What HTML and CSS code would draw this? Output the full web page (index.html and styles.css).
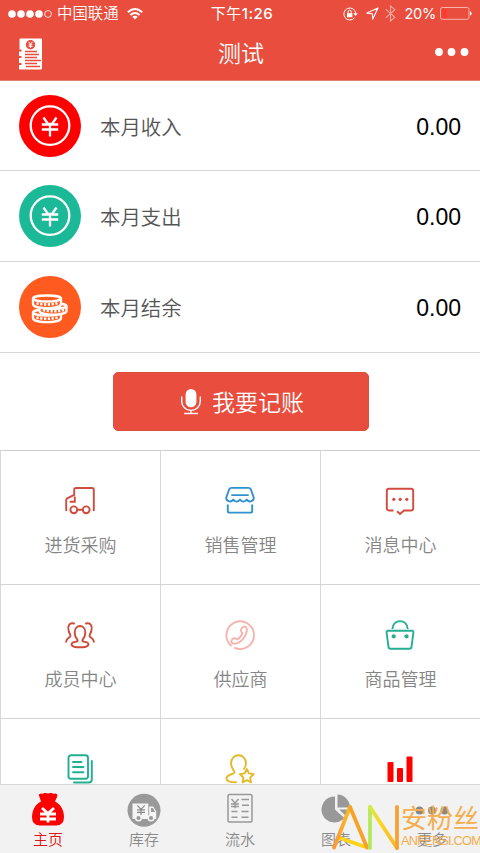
FILE: index.html
```html
<!DOCTYPE html>
<html lang="zh-CN">
<head>
<meta charset="utf-8">
<title>测试</title>
<link rel="stylesheet" href="styles.css">
</head>
<body>
<div class="app">
  <header class="header">
    <div class="status">
      <div class="status-left">
        <svg class="signal" width="44" height="10" viewBox="0 0 44 10"><g fill="#fff"><circle cx="4" cy="5" r="3.8"/><circle cx="13" cy="5" r="3.8"/><circle cx="22" cy="5" r="3.8"/><circle cx="31" cy="5" r="3.8"/></g><circle cx="40" cy="5" r="3.4" fill="none" stroke="#fff" stroke-width=".8"/></svg>
        <span class="carrier">中国联通</span>
        <svg width="16" height="12" viewBox="0 0 16 12"><g fill="none" stroke="#fff" stroke-width="1.9"><path d="M.8 4.2Q8-2 15.2 4.2"/><path d="M3.4 7Q8 3.1 12.6 7"/></g><path d="M5.3 8.7Q8 6.7 10.7 8.7L8 11.6Z" fill="#fff"/></svg>
      </div>
      <span class="time"><span class="period">下午</span>1:26</span>
      <div class="status-right">
        <svg width="15" height="14" viewBox="0 0 15 14"><path d="M11.500 10.800A6 6 0 1 1 12.800 6.200" fill="none" stroke="#fff" stroke-width="1"/><path d="M10.200 6.200h4.600l-2.300 2.700Z" fill="#fff"/><rect x="4" y="6.200" width="5.400" height="4" fill="#fff"/><path d="M5.100 6.300V4.900a1.600 1.600 0 0 1 3.200 0v1.400" fill="none" stroke="#fff"/></svg>
        <svg width="13" height="13" viewBox="0 0 13 13"><path d="M12 1 .9 6.100l5.400.6.5 5.400Z" fill="none" stroke="#fff" stroke-width="1.100" stroke-linejoin="round"/></svg>
        <svg width="11" height="17" viewBox="0 0 11 17"><path d="M.7 4.200 9.800 12.300 5.500 16V1l4.300 3.700L.7 12.800" fill="none" stroke="#f5aaa1" stroke-width="1.100"/></svg>
        <span class="percent">20%</span>
        <svg class="battery" width="32" height="13" viewBox="0 0 32 13"><rect x=".5" y=".5" width="28.500" height="11.800" rx="1.800" fill="none" stroke="#f7b4ac"/><rect x="2" y="2" width="5" height="8.800" fill="#ff3b30"/><path d="M30 4.300q1.600.4 1.600 2.100T30 8.500Z" fill="#fff"/></svg>
      </div>
    </div>
    <div class="nav">
      <svg class="ledger" width="24" height="32" viewBox="0 0 24 32"><path d="M1.500.5H22q1 0 1 1v29q0 1-1 1H1q-1 0-1-1V27h2.500v-2H0v-5h2.500v-2H0v-4.500h2.500v-2H.500V1.500q0-1 1-1Z" fill="#fff"/><circle cx="11.500" cy="6.800" r="4.700" fill="#e84d3d"/><path d="m9.600 3.800 1.900 2.600 1.900-2.600M11.500 6.400v3.500M9.600 6.800h3.800M9.600 8.300h3.800" fill="none" stroke="#fff" stroke-width="1"/><path d="M6 13.500h12M6 16.500h14M6 19.500h12M6 22.500h16M6 25.500h12M7 28.500h14" stroke="#e84d3d" stroke-width="1.700"/></svg>
      <h1 class="title">测试</h1>
      <svg class="dots" width="34" height="8" viewBox="0 0 34 8"><g fill="#fff"><circle cx="4" cy="4" r="3.900"/><circle cx="16.500" cy="4" r="3.900"/><circle cx="29.500" cy="4" r="3.900"/></g></svg>
    </div>
  </header>

  <section class="summary">
    <div class="row">
      <svg class="badge" width="62" height="62" viewBox="0 0 62 62"><circle cx="31" cy="31" r="31" fill="#f00"/><g fill="none" stroke="#fff"><circle cx="31" cy="30.600" r="19.300" stroke-width="2.300"/><path d="m24.500 22.500 4.500 6.500h4l4.500-6.500M31 29v12.500M22.800 29.500h16.400M22.800 34.500h16.400" stroke-width="2.300"/></g></svg>
      <span class="name">本月收入</span><span class="amount">0.00</span>
    </div>
    <div class="row">
      <svg class="badge" width="62" height="62" viewBox="0 0 62 62"><circle cx="31" cy="31" r="31" fill="#1cb999"/><g fill="none" stroke="#fff"><circle cx="31" cy="30.600" r="19.300" stroke-width="2.300"/><path d="m24.500 22.500 4.500 6.500h4l4.500-6.500M31 29v12.500M22.800 29.500h16.400M22.800 34.500h16.400" stroke-width="2.300"/></g></svg>
      <span class="name">本月支出</span><span class="amount">0.00</span>
    </div>
    <div class="row">
      <svg class="badge" width="62" height="62" viewBox="0 0 62 62"><circle cx="31" cy="31" r="31" fill="#ff5a20"/><g fill="#ff5a20" stroke="#fff" stroke-width="2.300"><path d="M14 36.500v5.500c0 5.500 28 5.500 28 0v-5.500"/><ellipse cx="28" cy="36.500" rx="14" ry="3"/><path d="M20.500 30v5c0 4.800 27 4.800 27 0v-5"/><ellipse cx="34" cy="30" rx="13.500" ry="2.800"/><path d="M14 22.500v5.500c0 5.500 28 5.500 28 0v-5.500"/><ellipse cx="28" cy="22.500" rx="14" ry="3"/></g><path d="M17.500 27.200q10.500 2.500 21 0M24 34q10.500 2.500 21 0M17.500 41.500q10.500 2.500 21 0" fill="none" stroke="#fff" stroke-width="2.600" stroke-dasharray="2.200 1.600"/></svg>
      <span class="name">本月结余</span><span class="amount">0.00</span>
    </div>
  </section>

  <div class="action">
    <button class="record">
      <svg width="20" height="26" viewBox="0 0 20 26"><rect x="4.600" y="0" width="10.800" height="18.300" rx="5.400" fill="#fff"/><path d="M.7 7.500v4.700a9.300 9.300 0 0 0 18.600 0V7.500M10 21.500v2.800M3.200 24.500h13.600" fill="none" stroke="#fff" stroke-width="1.400"/></svg>
      <span>我要记账</span>
    </button>
  </div>

  <main class="grid">
    <div class="cell">
      <svg class="icon" viewBox="0 -.8 30 30"><g fill="none" stroke="#cf4b3e" stroke-width="1.900" stroke-linecap="round"><path d="M1.200 23.500V13.200q0-1.200 1-1.700l7-3.400V3q0-1.800 1.800-1.800h16q1.800 0 1.800 1.800v20.500M9.800 10.500v4.400H5.500M12.300 23h5.300"/><circle cx="8.800" cy="23" r="3.400"/><circle cx="21.200" cy="23" r="3.400"/></g></svg>
      <span>进货采购</span>
    </div>
    <div class="cell">
      <svg class="icon" viewBox="0 -.6 30 30"><g fill="none" stroke="#3292cf" stroke-width="1.900" stroke-linecap="round" stroke-linejoin="round"><path d="M6.500 1.300h17q1.700 0 2.300 1.400l2.800 7.800c.8 4.200-4.500 5.800-6.800 2.500q-3.400 4-6.800 0-3.400 4-6.800 0c-2.300 3.300-7.600 1.700-6.800-2.500l2.800-7.800q.6-1.400 2.300-1.400ZM7 8.500h16M2.800 18.500v5.800q0 1.700 1.700 1.700h21q1.700 0 1.700-1.700v-5.800"/></g></svg>
      <span>销售管理</span>
    </div>
    <div class="cell">
      <svg class="icon" viewBox="0 -.5 30 30"><path d="M8.500 24H4q-2.200 0-2.200-2.200V4.400Q1.800 2.200 4 2.200h22q2.200 0 2.200 2.200v17.400Q28.200 24 26 24h-7l-4 3.500-3-2.800" fill="none" stroke="#d24b3d" stroke-width="1.900"/><g fill="#d24b3d"><circle cx="8.800" cy="12.800" r="1.600"/><circle cx="15.200" cy="12.800" r="1.600"/><circle cx="21.800" cy="12.800" r="1.600"/></g></svg>
      <span>消息中心</span>
    </div>
    <div class="cell">
      <svg class="icon" viewBox="0 0 30 30"><g fill="none" stroke="#cf4938" stroke-width="1.900" stroke-linecap="round" stroke-linejoin="round"><path d="M12.500 19.800c-2-2.200-2.800-4-2.800-7.400 0-8.600 10.600-8.600 10.600 0 0 3.400-.8 5.200-2.800 7.400-.5 1.200.2 1.800 2.500 2.100 5.500.9 5 5.400-5 5.400s-10.500-4.500-5-5.400c2.300-.3 3-.9 2.500-2.100ZM9 3.500C4 2.500 2.500 6 3.600 10.500c.5 3.300 3 4.600 1.400 6.200-1.800 1.600-3.600 2-3.900 5M21 3.500c5-1 6.500 2.500 5.400 7-.5 3.300-3 4.600-1.400 6.200 1.800 1.600 3.600 2 3.900 5"/></g></svg>
      <span>成员中心</span>
    </div>
    <div class="cell">
      <svg class="icon" viewBox="0 0 30 30"><g fill="none" stroke="#f3b5ad" stroke-width="1.900" stroke-linecap="round"><path d="M6 25.500A13.800 13.800 0 1 1 10 28"/><path d="M17.800 7.300c2.800-2 4.700.3 3.900 4.200-.9 5-5.400 10.600-9.900 11.800-3.600.9-6.400-.4-5.200-3 1.100-2.400 4-2.800 5.600-.9 2.400-1.200 4.500-3.800 5.200-6.300-2.200-1.500-1.800-4.400.4-5.800Z"/></g></svg>
      <span>供应商</span>
    </div>
    <div class="cell">
      <svg class="icon" viewBox="0 0 30 30"><g fill="none" stroke="#26ae92" stroke-width="1.900" stroke-linejoin="round"><path d="M2.900 10.800h24.200q1.500 0 1.300 1.700L26.500 27q-.3 1.800-2 1.800h-19q-1.700 0-2-1.800L1.600 12.500q-.2-1.700 1.300-1.700ZM7.400 9C7.500-1.500 22.700-1.500 22.700 9"/></g><g fill="#26ae92"><circle cx="8.700" cy="16.300" r="2.100"/><circle cx="21.500" cy="16.300" r="2.100"/></g></svg>
      <span>商品管理</span>
    </div>
    <div class="cell">
      <svg class="icon" viewBox="0 0 30 30"><g fill="none" stroke="#20b090" stroke-width="1.900" stroke-linecap="round"><rect x="3.500" y="1.200" width="19.500" height="23.500" rx="2.500"/><path d="M26.800 7v18.500q0 3-3 3H9M8 8h8.500M8 13h10.500M8 18.300h10.500"/></g></svg>
    </div>
    <div class="cell">
      <svg class="icon" viewBox="0 0 30 30"><g fill="none" stroke="#e3b926" stroke-width="1.900" stroke-linecap="round" stroke-linejoin="round"><path d="M11 28.300c-6.500 0-9.500-1.300-9.500-3.800 0-4.500 7.500-3.800 8-6 .3-1.500-3.500-4.500-3.500-9 0-11 15-11 15 0 0 2.200-1 4-2 5.300"/><path d="m21.800 15 2.100 4.400 4.800.7-3.500 3.400.8 4.800-4.200-2.300-4.200 2.300.8-4.800-3.500-3.400 4.800-.7Z"/></g></svg>
    </div>
    <div class="cell">
      <svg class="icon" viewBox="0 0 30 30"><g fill="#f00"><rect x="2.500" y="8" width="6" height="20" rx="1"/><rect x="12" y="14" width="6" height="14" rx="1"/><rect x="21.500" y="2.500" width="6" height="25.500" rx="1"/></g></svg>
    </div>
  </main>

  <nav class="tabs">
    <div class="tab active">
      <svg width="34" height="34" viewBox="0 1 34 34"><path d="M10 9.500 8.500 5C6.500 2 10 .5 11.500 2 12.500.8 16 .8 17 1.600 18.500.8 21.500.8 22.500 2c2-1.500 5 0 3.500 3l-2 4.500C30 12 33 19 33 25q0 8.500-8 8.500H9q-8 0-8-8.500C1 19 4 12 10 9.500Z" fill="#f00"/><path d="m11 16 6 5.500 6-5.500M17 21.500v9M9 22h16M9 27h16" fill="none" stroke="#fff" stroke-width="2.800"/></svg>
      <span>主页</span>
    </div>
    <div class="tab">
      <svg width="34" height="34" viewBox="0 0 34 34"><circle cx="17" cy="17.300" r="16.500" fill="#999"/><path d="M5.500 10.500h15.800V26H5.500ZM22.200 13.500h4l3 5V26h-7Z" fill="#f5f5f5"/><path d="M24 15h2l2 4h-4Z" fill="#999"/><g fill="#999" stroke="#f5f5f5" stroke-width="1.500"><circle cx="11.500" cy="25" r="2.800"/><circle cx="24" cy="25" r="2.800"/></g><path d="m10.300 12.300 3.700 4 3.700-4M14 16.300V22M10 16.800h8M10 19.300h8" fill="none" stroke="#888" stroke-width="1.200"/></svg>
      <span>库存</span>
    </div>
    <div class="tab">
      <svg width="34" height="34" viewBox="0 1 34 34"><g fill="none" stroke="#999" stroke-width="1.500"><rect x="5" y="2.500" width="24" height="27.500" rx="1.500"/><path d="m8.500 7 3.500 4.200L15.500 7M12 11.200v5M8 12h8M8 14.500h8M18.500 7.500H26M19 13.300h7M8.500 19.500h6M18.500 19.500h7M8.500 25.300h6M18.500 25.300h7"/></g></svg>
      <span>流水</span>
    </div>
    <div class="tab">
      <svg width="34" height="34" viewBox="-1.500 0 34 34"><g fill="#999"><path d="M14.500 3.500V16.500l9.300 8.500A13 13 0 1 1 14.500 3.500Z"/><path d="M17 1.500A13 13 0 0 1 29.500 14.500H17ZM18.500 16.500h10.500q-.5 4-3.500 6.500Z"/></g></svg>
      <span>图表</span>
    </div>
    <div class="tab">
      <svg width="34" height="34" viewBox="0 0 34 34"><g fill="#888"><circle cx="4.500" cy="17.500" r="3.900"/><circle cx="17" cy="17.500" r="3.900"/><circle cx="29.500" cy="17.500" r="3.900"/></g></svg>
      <span>更多</span>
    </div>
  </nav>

  <div class="watermark">
    <svg width="70" height="46" viewBox="0 0 70 46">
      <defs><linearGradient id="leg" x1="0" y1="1" x2="1" y2="0"><stop offset="0" stop-color="#ff9638"/><stop offset="1" stop-color="#f8bd25"/></linearGradient><linearGradient id="diag" x1="0" y1="0" x2="1" y2="1"><stop offset="0" stop-color="#d3ea45"/><stop offset=".4" stop-color="#ffd51c"/><stop offset="1" stop-color="#f7b52d"/></linearGradient></defs>
      <g fill="none" stroke-width="3.800" stroke-linecap="round"><path d="m9 34 24 8.500" stroke="#ffd21c"/><path d="M3 43.500 19 3" stroke="url(#leg)"/><path d="m19 3 17 40.500" stroke="#f9a126"/><path d="M39 44V3" stroke="#b5e85a"/><path d="m39 3 27 41" stroke="url(#diag)"/><path d="M66 44V3" stroke="#f5a136"/></g>
    </svg>
    <div class="mark-text"><span class="mark-cn">安粉丝</span><span class="mark-en">ANFENSI.COM</span></div>
  </div>
</div>
</body>
</html>
```
FILE: styles.css
```css
* { box-sizing: border-box; }
body { margin: 0; font-family: "Liberation Sans", "Noto Sans CJK SC", sans-serif; background: #fff; }
svg { display: block; flex: none; }
.app { position: relative; width: 480px; height: 853px; overflow: hidden; display: flex; flex-direction: column; }

.header { height: 81px; flex: none; background: #e84d3d; color: #fff; border-bottom: 1px solid #dc8177; }
.status { height: 27px; display: grid; grid-template-columns: 1fr auto 1fr; align-items: center; padding: 0 8px; font: 400 15.4px/26px Inter, "Noto Sans CJK SC", sans-serif; }
.status-left, .status-right { display: flex; align-items: center; }
.carrier { margin: 0 8px 0 5px; font-weight: 350; }
.time { padding-left: 4px; font-size: 15px; font-weight: 500; letter-spacing: .5px; }
.period { font-weight: 400; }
.status-right { justify-content: flex-end; }
.status-right svg { margin-right: 8px; }
.status-right svg:nth-child(2) { margin-right: 6px; }
.percent { margin-right: 4px; font-size: 14.6px; letter-spacing: -.3px; }
.status-right .battery { margin-right: 0; }
.nav { height: 53px; display: flex; align-items: center; justify-content: space-between; padding: 0 11px 0 19px; }
.title { margin: 0 6px 3px 0; font: 350 23px/34px "Noto Sans CJK SC", sans-serif; }
.ledger { margin-right: 10px; }
.dots { margin-bottom: 3px; }

.summary { flex: none; }
.row { height: 91px; display: flex; align-items: center; padding: 0 19px; border-bottom: 1px solid #d6d6d6; }
.row:first-child { height: 90px; }
.name { flex: 1; margin-left: 19px; font: 350 20.4px/30px "Noto Sans CJK SC", sans-serif; color: #555; }
.amount { padding-top: 3px; font-size: 23px; color: #000; }

.action { height: 97px; flex: none; display: flex; justify-content: center; padding: 19px 0 0 1px; }
.record { width: 256px; height: 59px; display: flex; align-items: center; justify-content: center; gap: 11px; padding: 0 0 0 4px; border: 1px solid #d95041; border-radius: 5px; background: #e84d3d; color: #fff; font: 350 23px/34px "Noto Sans CJK SC", sans-serif; }
.record span { margin-bottom: 2px; }

.grid { height: 334px; flex: none; overflow: hidden; display: grid; grid-template-columns: repeat(3, 160px); grid-auto-rows: 134px; border-top: 1px solid #cfcfcf; }
.cell { display: flex; flex-direction: column; align-items: center; padding-top: 35px; border-left: 1px solid #d8d8d8; border-bottom: 1px solid #d4d4d4; font: 350 18px/26px "Noto Sans CJK SC", sans-serif; color: #858585; }
.icon { width: 30px; height: 30px; margin: 0 1px 15px 0; }

.tabs { height: 69px; flex: none; display: grid; grid-template-columns: repeat(5, 1fr); border-top: 1px solid #d8d8d8; background: #f2f2f2; color: #8a8a8a; font: 350 15px/20px "Noto Sans CJK SC", sans-serif; }
.tab { display: flex; flex-direction: column; align-items: center; gap: 2px; padding-top: 8px; }
.active { color: #dc1414; }

.watermark { position: absolute; left: 331px; top: 804px; display: flex; }
.mark-text { display: flex; flex-direction: column; color: #f5ad4d; white-space: nowrap; }
.mark-cn { font: 400 26px/26px "Noto Sans CJK SC", sans-serif; }
.mark-en { font: 400 12.8px/13px "Liberation Sans", sans-serif; letter-spacing: -.8px; margin-top: 4px; }
```
